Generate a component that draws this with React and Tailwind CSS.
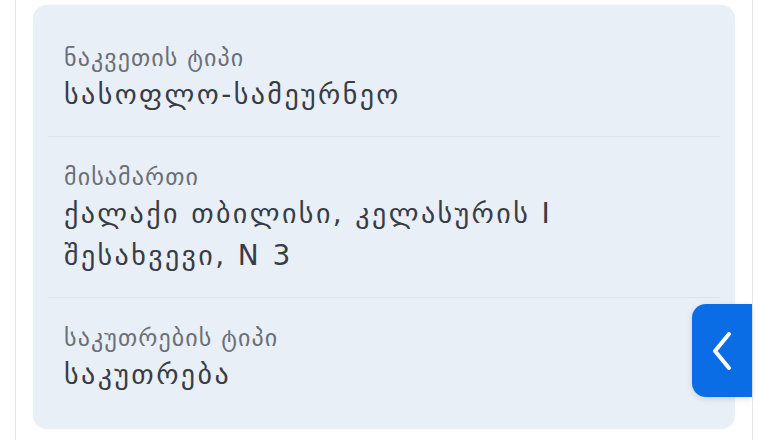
import React from 'react';

const rows = [
    { label: 'ნაკვეთის ტიპი', value: ['სასოფლო-სამეურნეო'] },
    { label: 'მისამართი', value: ['ქალაქი თბილისი, კელასურის I', 'შესახვევი, N 3'] },
    { label: 'საკუთრების ტიპი', value: ['საკუთრება'] },
];

const App = () => {
    return (
        <div className="w-[770px] h-[440px] bg-white overflow-hidden" style={{ fontFamily: '"DejaVu Sans", Roboto, sans-serif' }}>
            <div className="relative ml-[15px] w-[738px] h-full border-x border-[#e4e6ea] bg-white pt-[5px] px-[17px]">
                {/* Info card */}
                <div className="rounded-[14px] bg-[#e9eff7] px-[15px] py-[13px] shadow-[0_0_3px_rgba(0,0,0,0.04)]">
                    {rows.map((row, i) => (
                        <div
                            key={row.label}
                            className={`px-4 pt-[24px] pb-[20px] ${i < rows.length - 1 ? 'border-b border-[#dbe3ed]' : ''}`}
                        >
                            <div className="text-[24px] leading-[32px] tracking-[1.1px] text-[#6b7078]">{row.label}</div>
                            {row.value.map((line) => (
                                <div key={line} className="text-[28px] leading-[42px] tracking-[2.4px] text-[#383d45]">{line}</div>
                            ))}
                        </div>
                    ))}
                </div>

                {/* Side toggle */}
                <button className="absolute right-0 top-[304px] w-[60px] h-[93px] flex items-center justify-center bg-[#0b6de6] rounded-l-[14px] shadow-[0_2px_6px_rgba(0,0,0,0.12)]">
                    <svg width="22" height="40" viewBox="0 0 22 40" fill="none" stroke="white" strokeWidth="4" strokeLinecap="round" strokeLinejoin="round">
                        <path d="M18 3L4 20l14 17" />
                    </svg>
                </button>
            </div>
        </div>
    );
};

export default App;
